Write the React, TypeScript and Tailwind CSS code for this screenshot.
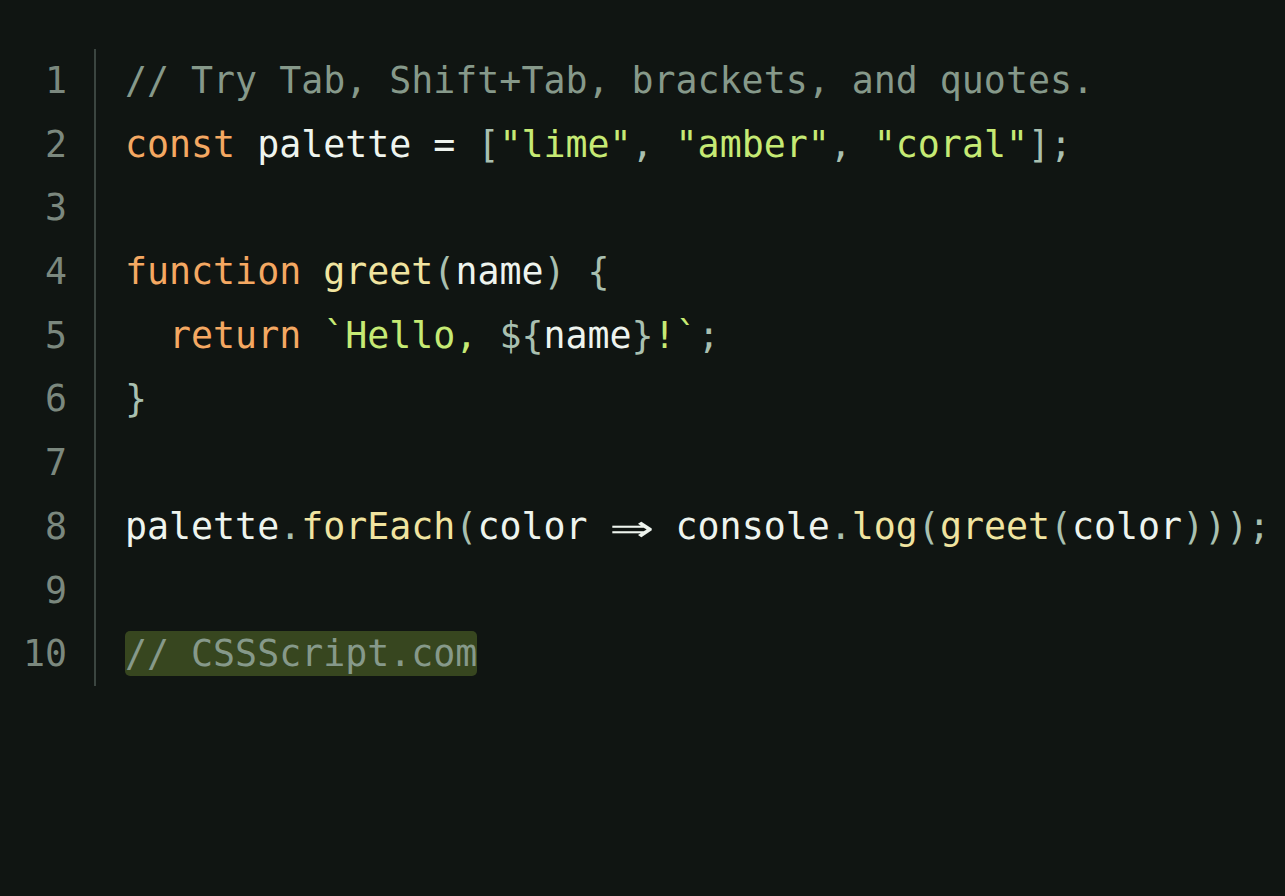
import React from "react";

const O = "text-[#f4a862]"; // keyword
const S = "text-[#c6ea74]"; // string
const W = "text-[#eef4ee]"; // identifier
const P = "text-[#a9c0b0]"; // punctuation
const Y = "text-[#f0e4a0]"; // function call
const C = "text-[#86998a]"; // comment

type Tok = [string, string];

const lines: Tok[][] = [
  [[C, "// Try Tab, Shift+Tab, brackets, and quotes."]],
  [
    [O, "const"], [W, " palette = "], [P, "["], [S, "\"lime\""], [P, ", "], [S, "\"amber\""], [P, ", "], [S, "\"coral\""], [P, "]"], [P, ";"],
  ],
  [],
  [[O, "function"], [W, " "], [Y, "greet"], [P, "("], [W, "name"], [P, ")"], [W, " "], [P, "{"]],
  [[W, "  "], [O, "return"], [W, " "], [S, "`Hello, "], [P, "${"], [W, "name"], [P, "}"], [S, "!`"], [P, ";"]],
  [[P, "}"]],
  [],
  [
    [W, "palette"], [P, "."], [Y, "forEach"], [P, "("], [W, "color "], ["ARROW", ""], [W, " console"], [P, "."], [Y, "log"], [P, "("], [Y, "greet"], [P, "("], [W, "color"], [P, ")))"], [P, ";"],
  ],
  [],
  [["HL", "// CSSScript.com"]],
];

export default function App() {
  return (
    <div
      className="min-h-[896px] w-full bg-[#101512] pt-[49px] text-[36.6px] leading-[63.7px]"
      style={{ fontFamily: '"DejaVu Sans Mono", "Liberation Mono", monospace' }}
    >
      <div className="flex">
        <div className="w-[67px] text-right text-[#7b887e]">
          {lines.map((_, i) => (
            <div key={i} className="h-[63.7px]">{i + 1}</div>
          ))}
        </div>
        <div className="ml-[27px] w-[2px] bg-[#3b4540]" />
        <div className="pl-[29px] whitespace-pre">
          {lines.map((l, i) => (
            <div key={i} className="h-[63.7px]">
              {l.length === 0 ? "\u00a0" : null}
              {l.map(([cls, t], j) => {
                if (cls === "ARROW")
                  return (
                    <span key={j} className="inline-block w-[2ch] text-center">
                      <span className={`inline-block scale-x-[2] scale-y-[1.35] ${W}`}>⇒</span>
                    </span>
                  );
                if (cls === "HL")
                  return (
                    <span key={j} className={`rounded-[5px] bg-[#37461f] py-[1px] ${C}`}>
                      {t}
                    </span>
                  );
                return (
                  <span key={j} className={cls}>
                    {t}
                  </span>
                );
              })}
            </div>
          ))}
        </div>
      </div>
    </div>
  );
}
